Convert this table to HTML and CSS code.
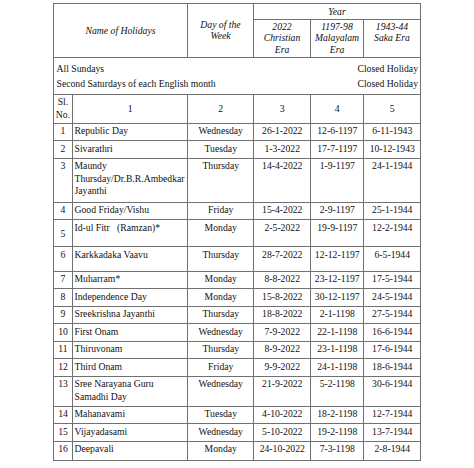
FILE: index.html
```html
<!DOCTYPE html>
<html lang="en">
<head>
<meta charset="utf-8">
<title>List of Holidays 2022</title>
<link rel="stylesheet" href="styles.css">
</head>
<body>
<table class="holidays">
  <colgroup>
    <col class="c-sl">
    <col class="c-name">
    <col class="c-day">
    <col class="c-ce">
    <col class="c-me">
    <col class="c-se">
  </colgroup>
  <thead>
    <tr class="h-year">
      <th colspan="2" rowspan="2">Name of Holidays</th>
      <th rowspan="2">Day of the<br>Week</th>
      <th colspan="3">Year</th>
    </tr>
    <tr class="h-eras">
      <th>2022<br>Christian<br>Era</th>
      <th>1197-98<br>Malayalam<br>Era</th>
      <th>1943-44<br>Saka Era</th>
    </tr>
  </thead>
  <tbody>
    <tr class="r-closed">
      <td colspan="6" class="closed">
        <div class="closed-line"><span>All Sundays</span><span>Closed Holiday</span></div>
        <div class="closed-line"><span>Second Saturdays of each English month</span><span>Closed Holiday</span></div>
      </td>
    </tr>
    <tr class="r-nums">
      <td class="sl slno">Sl.<br>No.</td>
      <td class="ctr mid">1</td>
      <td class="ctr mid">2</td>
      <td class="ctr mid">3</td>
      <td class="ctr mid">4</td>
      <td class="ctr mid">5</td>
    </tr>
    <tr><td class="sl">1</td><td>Republic Day</td><td class="ctr">Wednesday</td><td class="ctr">26-1-2022</td><td class="ctr">12-6-1197</td><td class="ctr">6-11-1943</td></tr>
    <tr><td class="sl">2</td><td>Sivarathri</td><td class="ctr">Tuesday</td><td class="ctr">1-3-2022</td><td class="ctr">17-7-1197</td><td class="ctr">10-12-1943</td></tr>
    <tr class="r-3line"><td class="sl">3</td><td>Maundy<br>Thursday/Dr.B.R.Ambedkar<br>Jayanthi</td><td class="ctr">Thursday</td><td class="ctr">14-4-2022</td><td class="ctr">1-9-1197</td><td class="ctr">24-1-1944</td></tr>
    <tr><td class="sl">4</td><td>Good Friday/Vishu</td><td class="ctr">Friday</td><td class="ctr">15-4-2022</td><td class="ctr">2-9-1197</td><td class="ctr">25-1-1944</td></tr>
    <tr class="r-5"><td class="sl mid">5</td><td>Id-ul Fitr&nbsp;&nbsp; (Ramzan)*</td><td class="ctr">Monday</td><td class="ctr">2-5-2022</td><td class="ctr">19-9-1197</td><td class="ctr">12-2-1944</td></tr>
    <tr class="r-6"><td class="sl">6</td><td>Karkkadaka Vaavu</td><td class="ctr">Thursday</td><td class="ctr">28-7-2022</td><td class="ctr">12-12-1197</td><td class="ctr">6-5-1944</td></tr>
    <tr><td class="sl">7</td><td>Muharram*</td><td class="ctr">Monday</td><td class="ctr">8-8-2022</td><td class="ctr">23-12-1197</td><td class="ctr">17-5-1944</td></tr>
    <tr><td class="sl">8</td><td>Independence Day</td><td class="ctr">Monday</td><td class="ctr">15-8-2022</td><td class="ctr">30-12-1197</td><td class="ctr">24-5-1944</td></tr>
    <tr><td class="sl">9</td><td>Sreekrishna Jayanthi</td><td class="ctr">Thursday</td><td class="ctr">18-8-2022</td><td class="ctr">2-1-1198</td><td class="ctr">27-5-1944</td></tr>
    <tr><td class="sl">10</td><td>First Onam</td><td class="ctr">Wednesday</td><td class="ctr">7-9-2022</td><td class="ctr">22-1-1198</td><td class="ctr">16-6-1944</td></tr>
    <tr><td class="sl">11</td><td>Thiruvonam</td><td class="ctr">Thursday</td><td class="ctr">8-9-2022</td><td class="ctr">23-1-1198</td><td class="ctr">17-6-1944</td></tr>
    <tr><td class="sl">12</td><td>Third Onam</td><td class="ctr">Friday</td><td class="ctr">9-9-2022</td><td class="ctr">24-1-1198</td><td class="ctr">18-6-1944</td></tr>
    <tr class="r-2line"><td class="sl">13</td><td>Sree Narayana Guru<br>Samadhi Day</td><td class="ctr">Wednesday</td><td class="ctr">21-9-2022</td><td class="ctr">5-2-1198</td><td class="ctr">30-6-1944</td></tr>
    <tr><td class="sl">14</td><td>Mahanavami</td><td class="ctr">Tuesday</td><td class="ctr">4-10-2022</td><td class="ctr">18-2-1198</td><td class="ctr">12-7-1944</td></tr>
    <tr><td class="sl">15</td><td>Vijayadasami</td><td class="ctr">Wednesday</td><td class="ctr">5-10-2022</td><td class="ctr">19-2-1198</td><td class="ctr">13-7-1944</td></tr>
    <tr class="r-last"><td class="sl">16</td><td>Deepavali</td><td class="ctr">Monday</td><td class="ctr">24-10-2022</td><td class="ctr">7-3-1198</td><td class="ctr">2-8-1944</td></tr>
  </tbody>
</table>
</body>
</html>
```

FILE: styles.css
```css
html, body {
  margin: 0;
  padding: 0;
  background: #ffffff;
}

body {
  padding: 3px 0 0 53px;
  font-family: "Liberation Serif", "Times New Roman", serif;
  font-size: 9.7px;
  color: #111111;
}

.holidays {
  border-collapse: collapse;
  table-layout: fixed;
  width: 367px;
}

.c-sl { width: 19px; }
.c-name { width: 115px; }
.c-day { width: 66px; }
.c-ce { width: 57px; }
.c-me { width: 53px; }
.c-se { width: 57px; }

.holidays th,
.holidays td {
  border: 1px solid #707070;
  padding: 1.5px 1px 0 1.5px;
  line-height: 12.5px;
  vertical-align: top;
  text-align: left;
  overflow: hidden;
  white-space: nowrap;
}

.holidays th {
  font-weight: normal;
  font-style: italic;
  text-align: center;
  vertical-align: middle;
  line-height: 11.5px;
  padding: 0 2px;
}

.h-year { height: 15.5px; }
.h-eras { height: 38px; }
.h-eras th { vertical-align: top; padding-top: 1px; }

.holidays td.closed {
  padding: 1px 2px 0 2.5px;
  vertical-align: middle;
}
.closed-line {
  display: flex;
  justify-content: space-between;
  line-height: 15.5px;
}

.holidays td.slno {
  vertical-align: middle;
  text-align: left;
  padding: 0 1px 0 2px;
  line-height: 12.5px;
}

.holidays td.mid { vertical-align: middle; }

tbody tr { height: 17.5px; }
tbody tr.r-3line { height: 44px; }
tbody tr.r-5 { height: 27px; }
tbody tr.r-6 { height: 24.5px; }
tbody tr.r-2line { height: 30px; }
tbody tr.r-last { height: 19px; }
tbody tr.r-closed { height: 37px; }
tbody tr.r-nums { height: 29px; }

.holidays td.sl {
  text-align: center;
  padding-left: 0;
  padding-right: 0;
}

.holidays td.ctr { text-align: center; }
```
